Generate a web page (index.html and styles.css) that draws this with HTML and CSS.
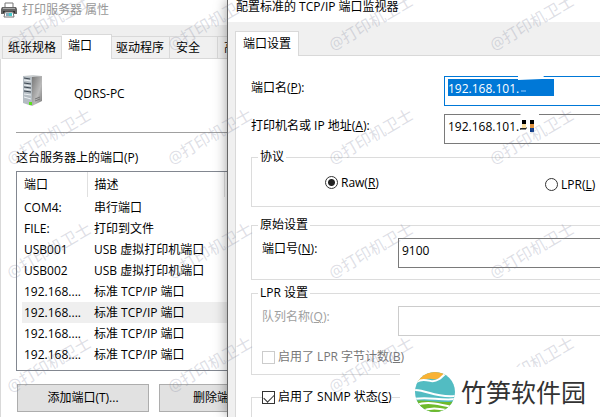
FILE: index.html
```html
<!DOCTYPE html>
<html lang="zh-CN">
<head>
  <meta charset="utf-8">
  <title>打印服务器 属性</title>
  <link rel="stylesheet" href="styles.css">
</head>
<body>

  <main class="server">
    <header class="server-title">
      <svg width="16" height="16" viewBox="0 0 16 16">
        <path d="M4 1h8v5H4z" fill="#fff" stroke="#777"/>
        <path d="M1 5h14l1 2v5H0V7z" fill="#666"/>
        <path d="M2 6h12v1H2z" fill="#aaa"/>
        <path d="M2 9h12v2H2z" fill="#333"/>
        <path d="M4 10h8l1 5H3z" fill="#fff" stroke="#777"/>
        <path d="M5 11h6v3H5z" fill="#8ab"/>
        <path d="M8 11h3v3H8z" fill="#4cc"/>
      </svg>
      <span>打印服务器 属性</span>
    </header>

    <nav class="tabs">
      <button class="tab">纸张规格</button>
      <button class="tab active">端口</button>
      <button class="tab tight">驱动程序</button>
      <button class="tab wide">安全</button>
      <button class="tab wide">高级</button>
    </nav>

    <section class="pane">
      <div class="host">
        <svg width="20" height="32" viewBox="0 0 20 32">
          <defs>
            <linearGradient id="side" x1="0" y1="0" x2="1" y2="1">
              <stop offset="0" stop-color="#777"/>
              <stop offset=".6" stop-color="#bbb"/>
              <stop offset="1" stop-color="#777"/>
            </linearGradient>
          </defs>
          <path d="M0 1l10-1 9 1-10 2z" fill="#ccd0d2"/>
          <path d="M9 2l10-1v25L9 31z" fill="url(#side)"/>
          <path d="M0 1l9 1v29l-9-3z" fill="#b4bcc2"/>
          <path d="M1 3l6 1M1 8l7 1M1 12l7 1M1 16l7 1" stroke="#3c4650"/>
          <path d="M1 5l7 1M1 10l7 1M1 14l7 1M1 19l7 1M1 22l7 2" stroke="#edf1f4"/>
          <path d="M12 24l5-2M12 26l5-2" stroke="#777"/>
          <rect x="6" y="27" width="3" height="3" fill="#5be01c"/>
        </svg>
        <span>QDRS-PC</span>
      </div>

      <h2 class="list-label">这台服务器上的端口(P)</h2>
      <div class="list">
        <table>
          <thead>
            <tr><th class="port">端口</th><th class="desc">描述</th><th></th></tr>
          </thead>
          <tbody>
            <tr><td>COM4:</td><td>串行端口</td><td></td></tr>
            <tr><td>FILE:</td><td>打印到文件</td><td></td></tr>
            <tr><td>USB001</td><td>USB 虚拟打印机端口</td><td></td></tr>
            <tr><td>USB002</td><td>USB 虚拟打印机端口</td><td></td></tr>
            <tr><td>192.168....</td><td>标准 TCP/IP 端口</td><td></td></tr>
            <tr class="current"><td>192.168....</td><td>标准 TCP/IP 端口</td><td></td></tr>
            <tr><td>192.168....</td><td>标准 TCP/IP 端口</td><td></td></tr>
            <tr><td>192.168....</td><td>标准 TCP/IP 端口</td><td></td></tr>
          </tbody>
        </table>
      </div>

      <div class="actions">
        <button>添加端口(T)...</button>
        <button>删除端口(D)</button>
      </div>
    </section>
  </main>

  <form class="dialog">
    <header class="dialog-title">配置标准的 TCP/IP 端口监视器</header>
    <nav class="dialog-tabs">
      <button type="button" class="dialog-tab">端口设置</button>
    </nav>

    <div class="settings">
      <div class="field">
        <label for="name">端口名(<u>P</u>):</label>
        <div class="box">
          <input id="name" class="selected" type="text" value="192.168.101.">
          <svg class="smudge" width="100" height="26" viewBox="0 0 100 26">
            <path d="M0 0h26l-2 3-26 1z" fill="#fff"/>
            <path d="M3 15h5" stroke="#9cf"/>
          </svg>
        </div>
      </div>
      <div class="field">
        <label for="address">打印机名或 IP 地址(<u>A</u>):</label>
        <div class="box">
          <input id="address" type="text" value="192.168.101.">
          <svg class="smudge" width="40" height="26" viewBox="0 0 40 26">
            <path d="M3 0h18v1H2z" fill="#fff"/>
            <path d="M2 15h6v-2z" fill="#222" stroke="#222"/>
            <path d="M4 6h4v4H4zM12 6h4v4h-4z" fill="#000"/>
            <path d="M4 10h4v4H4z" fill="#fde0a0"/>
            <path d="M12 10h4v4h-4z" fill="#df923e"/>
            <path d="M12 14h4v4h-4z" fill="#0b3a8c"/>
          </svg>
        </div>
      </div>

      <fieldset class="protocol">
        <legend>协议</legend>
        <label><input type="radio" name="protocol" checked>Raw(<u>R</u>)</label>
        <label class="lpr"><input type="radio" name="protocol">LPR(<u>L</u>)</label>
      </fieldset>

      <fieldset class="raw">
        <legend>原始设置</legend>
        <div class="row">
          <label for="number">端口号(<u>N</u>):</label>
          <input id="number" type="text" value="9100">
        </div>
      </fieldset>

      <fieldset class="queue">
        <legend>LPR 设置</legend>
        <div class="row off">
          <label for="queue">队列名称(<u>Q</u>):</label>
          <input id="queue" type="text" disabled>
        </div>
        <label class="check count"><input type="checkbox" disabled>启用了 LPR 字节计数(<u>B</u>)</label>
      </fieldset>

      <fieldset class="snmp">
        <legend><label class="check"><input type="checkbox" checked>启用了 SNMP 状态(<u>S</u>)</label></legend>
      </fieldset>
    </div>
  </form>

  <div class="watermarks" aria-hidden="true">
    <span>@打印机卫士</span><span>@打印机卫士</span><span>@打印机卫士</span><span>@打印机卫士</span>
    <span>@打印机卫士</span><span>@打印机卫士</span><span>@打印机卫士</span><span>@打印机卫士</span>
    <span>@打印机卫士</span><span>@打印机卫士</span><span>@打印机卫士</span><span>@打印机卫士</span>
    <span>@打印机卫士</span><span>@打印机卫士</span><span>@打印机卫士</span><span>@打印机卫士</span>
  </div>

  <div class="brand">
    <svg width="42" height="42" viewBox="0 0 42 42">
      <defs><clipPath id="round"><circle cx="21" cy="21" r="20"/></clipPath></defs>
      <g clip-path="url(#round)">
        <path d="M0 0h42v42H0z" fill="#52bcc2"/>
        <path d="M0 30c12-2 26 3 42 0v12H0z" fill="#6fba2c"/>
        <path d="M0 0h34c-6 7-10 9-16 8-5-1-10 0-14 3H0z" fill="#f9b233"/>
        <g fill="none" stroke="#fff" stroke-width="2">
          <path d="M2 11c6-3 10-2 15-1 6 1 10-3 15-8"/>
          <path d="M0 19c14 0 20 8 42 6"/>
          <path d="M0 28c14-3 26 2 42 0"/>
          <path d="M2 34c12-4 22-1 37 2"/>
          <path d="M8 40c8-4 16-3 24-1"/>
        </g>
      </g>
    </svg>
    <span>竹笋软件园</span>
  </div>

</body>
</html>
```
FILE: styles.css
```css
* {
  box-sizing: border-box;
}
body {
  margin: 0;
  height: 100vh;
  overflow: hidden;
  position: relative;
  background: #efefef;
  color: #000;
  font: 12px/16px "Open Sans", "Noto Sans CJK SC", sans-serif;
}
button, input {
  font: inherit;
  color: inherit;
}

/* server properties window */
.server {
  display: flex;
  flex-direction: column;
  height: 100%;
}
.server-title {
  display: flex;
  gap: 5px;
  height: 25px;
  padding: 2px 1px;
  background: #fff;
  color: #999;
}
.tabs {
  display: flex;
  align-items: flex-end;
  height: 34px;
  padding-left: 2px;
}
.tab {
  height: 23px;
  padding: 0 5px;
  border: 1px solid #d9d9d9;
  border-left: 0;
  background: #f0f0f0;
  white-space: nowrap;
}
.tab:first-child {
  border-left: 1px solid #d9d9d9;
}
.tab.active {
  height: 25px;
  padding: 0 19px 2px 6px;
  border-bottom: 0;
  background: #fff;
}
.tab.tight {
  padding: 0 5px 0 4px;
}
.tab.wide {
  padding: 0 17px 0 6px;
}
.pane {
  flex: 1;
  padding: 16px 0 0 15px;
  border-left: 1px solid #d9d9d9;
  background: #fff;
}
.host {
  display: flex;
  gap: 31px;
  height: 58px;
  padding-left: 7px;
  border-bottom: 1px solid #a0a0a0;
}
.host span {
  padding-top: 11px;
}
.list-label {
  margin: 17px 0 5px;
  font-size: 12px;
  font-weight: normal;
}
.list {
  height: 200px;
  padding-left: 5px;
  border: 1px solid #828790;
}
.list table {
  width: 100%;
  border-collapse: collapse;
}
.list th, .list td {
  height: 21px;
  padding: 0 0 0 2px;
  text-align: left;
  font-weight: normal;
}
.list td + td, .list th + th {
  padding-left: 7px;
}
.list th {
  height: 25px;
}
.list .port {
  width: 65px;
  border-right: 1px solid #e0e0e0;
}
.list .desc {
  width: 137px;
  border-right: 1px solid #e0e0e0;
}
.current {
  background: #efefef;
}
.actions {
  display: flex;
  gap: 10px;
  padding: 13px 0 0 1px;
}
.actions button {
  width: 132px;
  height: 28px;
  padding: 0;
  border: 1px solid #adadad;
  background: #e1e1e1;
}

/* port monitor dialog */
.dialog {
  position: absolute;
  inset: 0 0 0 227px;
  display: flex;
  flex-direction: column;
  overflow: hidden;
  border-left: 1px solid #666;
  background: #f0f0f0;
  box-shadow: 0 0 12px rgba(0, 0, 0, 0.4);
}
.dialog-title {
  height: 22px;
  padding-left: 8px;
  line-height: 14px;
  background: #fff;
}
.dialog-tabs {
  display: flex;
  padding: 9px 0 0 7px;
}
.dialog-tab {
  height: 25px;
  padding: 0 7px;
  border: 1px solid #d9d9d9;
  border-bottom: 0;
  background: #fff;
  position: relative;
  z-index: 1;
}
.settings {
  flex: 1;
  min-height: 0;
  margin: -1px 0 0 7px;
  padding: 20px 0 0 15px;
  border: 1px solid #d9d9d9;
  border-right: 0;
  border-bottom: 0;
  background: #fff;
}
.field {
  display: flex;
  height: 30px;
  margin-bottom: 8px;
}
.field + .field {
  margin-bottom: 5px;
}
.field label {
  flex: none;
  width: 193px;
  padding-top: 4px;
}
.box {
  flex: 1;
  display: flex;
  position: relative;
}
input[type="text"] {
  flex: 1;
  min-width: 0;
  height: 30px;
  padding: 0 3px 5px;
  border: 1px solid #7a7a7a;
  border-right: 0;
  outline: 0;
  background: #fff;
}
input.selected {
  border-color: #0078d7;
  background: linear-gradient(#0078d7, #0078d7) 3px 2px / 106px 17px no-repeat #fff;
  color: #fff;
}
input[type="text"]:disabled {
  border-color: #ccc;
}
.smudge {
  position: absolute;
  left: 74px;
  top: 0;
}
fieldset {
  margin: 0;
  padding: 0 0 0 10px;
  border: 1px solid #dcdcdc;
  border-right: 0;
}
legend {
  margin-left: -4px;
  padding: 0 2px;
}
.protocol {
  display: flex;
  height: 58px;
  margin-bottom: 10px;
  padding: 10px 0 0 73px;
}
.protocol legend {
  margin-left: -67px;
}
.protocol label {
  display: flex;
  width: 220px;
}
.protocol .lpr {
  width: auto;
  padding-top: 2px;
}
input[type="radio"] {
  appearance: none;
  flex: none;
  width: 13px;
  height: 13px;
  margin: 1px 3px 0 0;
  border: 1px solid #333;
  border-radius: 50%;
  background: #fff;
}
input[type="radio"]:checked {
  background: radial-gradient(circle, #222 3px, #fff 4px);
}
.raw {
  height: 63px;
  margin-bottom: 5px;
}
.row {
  display: flex;
  padding-top: 5px;
}
.row label {
  width: 136px;
  padding-top: 3px;
}
.off {
  color: #a0a0a0;
}
.queue {
  height: 90px;
  margin-bottom: 14px;
}
.check {
  display: flex;
  align-items: center;
}
.count {
  padding-top: 13px;
  color: #777;
}
input[type="checkbox"] {
  appearance: none;
  width: 13px;
  height: 13px;
  margin: 0 3px 0 0;
  border: 1px solid #333;
  background: #fff;
}
input[type="checkbox"]:disabled {
  border-color: #ccc;
}
input[type="checkbox"]:checked::before {
  content: "";
  display: block;
  width: 9px;
  height: 5px;
  margin: 2px 0 0 1px;
  border: solid #333;
  border-width: 0 0 1px 1px;
  transform: rotate(-45deg);
}
.snmp {
  height: 60px;
}
.snmp legend {
  margin-left: 0;
  padding: 0;
}

/* marks that lie over both windows */
.watermarks {
  position: absolute;
  left: 8px;
  top: -60px;
  display: grid;
  grid-template-columns: repeat(4, 161px);
  grid-auto-rows: 114px;
  align-items: end;
  color: rgba(120, 125, 150, 0.25);
  font-size: 16px;
  pointer-events: none;
}
.watermarks span {
  transform: rotate(-30deg);
  transform-origin: left center;
}
.brand {
  position: absolute;
  left: 400px;
  right: 0;
  bottom: 0;
  display: flex;
  align-items: center;
  gap: 5px;
  height: 50px;
  padding-left: 14px;
  background: #fff;
  color: #333;
  font-size: 25px;
  line-height: 32px;
  white-space: nowrap;
}
```
